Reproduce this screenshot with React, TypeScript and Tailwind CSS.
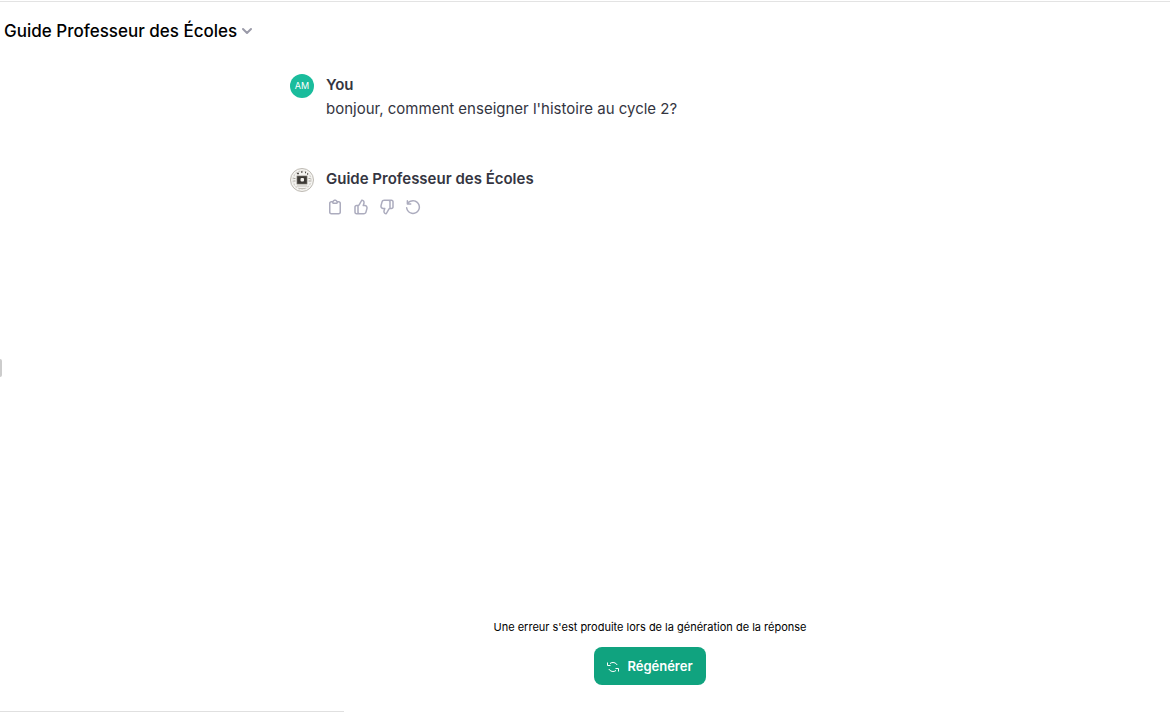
import React from 'react'
import { ChevronDown } from 'lucide-react'

const THUMB_PATH =
  'M12.1318 2.50389C12.3321 2.15338 12.7235 1.95768 13.124 2.00775L13.5778 2.06447C16.0449 2.37286 17.636 4.83353 16.9048 7.20993L16.354 8.99999H17.0722C19.7097 8.99999 21.6253 11.5079 20.9313 14.0525L19.5677 19.0525C19.0931 20.7927 17.5124 22 15.7086 22H6C4.34315 22 3 20.6568 3 19V12C3 10.3431 4.34315 8.99999 6 8.99999H8C8.25952 8.99999 8.49914 8.86094 8.6279 8.63561L12.1318 2.50389ZM10 20H15.7086C16.6105 20 17.4008 19.3964 17.6381 18.5262L19.0018 13.5262C19.3488 12.2539 18.391 11 17.0722 11H15C14.6827 11 14.3841 10.8494 14.1956 10.5941C14.0071 10.3388 13.9509 10.0092 14.0442 9.70591L14.9932 6.62175C15.3384 5.49984 14.6484 4.34036 13.5319 4.08468L10.3644 9.62789C10.0522 10.1742 9.56691 10.5859 9 10.8098V19C9 19.5523 9.44772 20 10 20ZM7 11V19C7 19.3506 7.06015 19.6872 7.17071 20H6C5.44772 20 5 19.5523 5 19V12C5 11.4477 5.44772 11 6 11H7Z'

const CLIPBOARD_PATH =
  'M12 4C10.8954 4 10 4.89543 10 6H14C14 4.89543 13.1046 4 12 4ZM8.53513 4C9.22675 2.8044 10.5194 2 12 2C13.4806 2 14.7733 2.8044 15.4649 4H17C18.6569 4 20 5.34315 20 7V19C20 20.6569 18.6569 22 17 22H7C5.34315 22 4 20.6569 4 19V7C4 5.34315 5.34315 4 7 4H8.53513ZM8 6H7C6.44772 6 6 6.44772 6 7V19C6 19.5523 6.44772 20 7 20H17C17.5523 20 18 19.5523 18 19V7C18 6.44772 17.5523 6 17 6H16C16 7.10457 15.1046 8 14 8H10C8.89543 8 8 7.10457 8 6Z'

const RETRY_PATH =
  'M4.5 2.5C5.05228 2.5 5.5 2.94772 5.5 3.5V5.07196C7.19872 3.47759 9.48483 2.5 12 2.5C17.2467 2.5 21.5 6.75329 21.5 12C21.5 17.2467 17.2467 21.5 12 21.5C7.1307 21.5 3.11828 17.8375 2.565 13.1164C2.50071 12.5679 2.89327 12.0711 3.4418 12.0068C3.99033 11.9425 4.48712 12.3351 4.5514 12.8836C4.98798 16.6089 8.15708 19.5 12 19.5C16.1421 19.5 19.5 16.1421 19.5 12C19.5 7.85786 16.1421 4.5 12 4.5C9.7796 4.5 7.7836 5.46469 6.40954 7H9C9.55228 7 10 7.44772 10 8C10 8.55228 9.55228 9 9 9H4.5C3.94772 9 3.5 8.55228 3.5 8V3.5C3.5 2.94772 3.94772 2.5 4.5 2.5Z'

const actions = [
  { label: 'Copier', path: CLIPBOARD_PATH, flip: false },
  { label: 'Bonne réponse', path: THUMB_PATH, flip: false },
  { label: 'Mauvaise réponse', path: THUMB_PATH, flip: true },
  { label: 'Régénérer la réponse', path: RETRY_PATH, flip: false },
]

const GuideAvatar: React.FC = () => (
  <svg width="24" height="24" viewBox="0 0 24 24" fill="none" className="shrink-0" aria-hidden="true">
    <circle cx="12" cy="12" r="11.5" fill="#f4f3f0" stroke="#bdb9b2" />
    <circle cx="12" cy="12" r="9" stroke="#d2cfca" strokeWidth="1.2" strokeDasharray="2 1.2" />
    <path d="M3.5 10.5h2M3.5 13h2M18.5 10.5h2M18.5 13h2" stroke="#aaa69f" />
    <path d="M7 5.5h2M11 4h1.5M15 4.5h1M17 6h1" stroke="#55514c" strokeWidth="1.6" />
    <rect x="7" y="8" width="10" height="8" fill="#3c3935" stroke="#77736c" strokeWidth=".7" />
    <rect x="10.5" y="10" width="3.5" height="3.5" rx="1" fill="#f4f2ee" />
    <path d="M7 18h10M9 20.5h6" stroke="#c2beb7" />
  </svg>
)

const RegenerateIcon: React.FC = () => (
  <svg width="12" height="12" viewBox="0 0 12 12" fill="none" stroke="currentColor" aria-hidden="true">
    <path d="M.5 1.5v3h3M3 2.500A4.800 4.800 0 0 1 10.200 4" />
    <path d="M11.500 10.500v-3h-3M9 9.500A4.800 4.800 0 0 1 1.800 8" />
  </svg>
)

const Message: React.FC<{ avatar: React.ReactNode; author: string; children: React.ReactNode }> = ({
  avatar,
  author,
  children,
}) => (
  <article className="flex gap-3">
    <div className="pt-px">{avatar}</div>
    <div className="min-w-0 flex-1">
      <h2 className="text-[15px] leading-6 font-semibold">{author}</h2>
      {children}
    </div>
  </article>
)

export default function App() {
  return (
    <div className="relative flex min-h-screen flex-col border-t border-white bg-white font-['Inter','Liberation_Sans',sans-serif] text-[#343541]">
      <header className="border-t border-[#e3e3e3] px-1 pt-[15px]">
        <button type="button" className="flex items-center gap-0.5 text-[17px] leading-7 font-medium text-black">
          Guide Professeur des Écoles
          <ChevronDown size={16} strokeWidth={3} className="text-[#9a9aa8]" />
        </button>
      </header>

      <main className="flex flex-1 flex-col pl-[130px]">
        <div className="mx-auto flex w-full max-w-[720px] flex-1 flex-col gap-[46px] pt-7">
          <Message
            author="You"
            avatar={
              <div className="flex size-6 items-center justify-center rounded-full bg-[#1abc9c] text-[9px] text-white">
                AM
              </div>
            }
          >
            <p className="text-[15px] leading-6">bonjour, comment enseigner l'histoire au cycle 2?</p>
          </Message>
          <Message author="Guide Professeur des Écoles" avatar={<GuideAvatar />}>
            <div className="flex gap-2 pt-[7px] text-[#acacbe]">
              {actions.map(({ label, path, flip }) => (
                <button key={label} type="button" aria-label={label} className={flip ? 'rotate-180' : ''}>
                  <svg width="18" height="18" viewBox="0 0 24 24" fill="none">
                    <path d={path} fill="currentColor" fillRule="evenodd" clipRule="evenodd" />
                  </svg>
                </button>
              ))}
            </div>
          </Message>
        </div>

        <div className="flex flex-col items-center gap-3 pb-[26px] text-black">
          <p className="text-[11px] leading-4">Une erreur s'est produite lors de la génération de la réponse</p>
          <button
            type="button"
            className="flex h-[38px] items-center gap-2 rounded-lg bg-[#10a37f] px-[13px] pt-0.5 text-[13px] font-semibold text-white"
          >
            <RegenerateIcon />
            Régénérer
          </button>
        </div>
      </main>

      <footer className="h-px w-[344px] bg-[#e0e0e0]" />
      <div className="absolute top-[358px] left-0 h-[18px] w-0.5 rounded-r-sm bg-[#cccccc]" />
    </div>
  )
}
